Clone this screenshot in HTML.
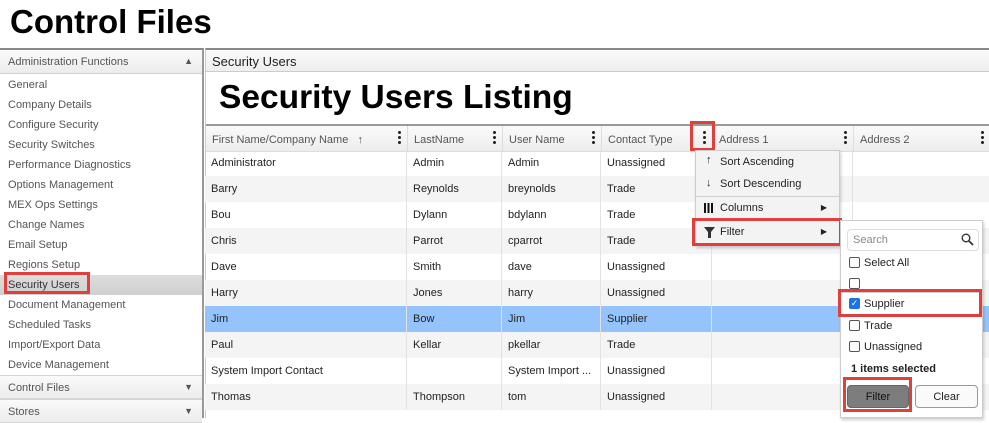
<!DOCTYPE html>
<html><head><style>
*{box-sizing:border-box;margin:0;padding:0}
body{width:989px;height:418px;overflow:hidden;background:#fff;font-family:"Liberation Sans",sans-serif;position:relative;color:#222}
.a{position:absolute}
h1{position:absolute;left:10px;top:3px;font-size:33px;font-weight:bold;color:#000}
.side{left:0;top:48px;width:204px;height:370px;border-top:2px solid #888;border-right:2px solid #999}
.sh{position:absolute;left:0;width:202px;height:24px;background:linear-gradient(#fafafa,#ececec);border-bottom:1px solid #d5d5d5;font-size:11px;color:#555;padding:6px 8px}
.sh span{position:absolute;right:9px;top:6px;font-size:9px;color:#555}
.it{position:absolute;left:0;width:202px;height:20px;font-size:11px;color:#555;padding:4px 8px}
.main{left:205px;top:48px;width:784px;height:370px;border-top:2px solid #888;border-left:1px solid #ccc}
.bar{position:absolute;left:0;top:0;width:784px;height:22px;background:linear-gradient(#fafafa,#eee);border-bottom:1px solid #ccc;font-size:13px;padding:4px 6px;color:#222}
.t2{position:absolute;left:13px;top:29px;font-size:33.5px;font-weight:bold;color:#000}
.hdr{position:absolute;left:0;top:74px;width:784px;height:28px;border-top:2px solid #999;background:linear-gradient(#fafafa,#ededed);border-bottom:1px solid #ddd}
.hc{position:absolute;top:0;height:26px;border-right:1px solid #ddd;font-size:11px;color:#555;padding:8px 6px}
.dots{position:absolute;right:6px;top:5px;width:3px}
.dots i{display:block;width:3px;height:3px;background:#222;border-radius:50%;margin-bottom:2px}
.row{position:absolute;left:0;width:784px;height:26px;font-size:11px;color:#222}
.row div{position:absolute;top:0;height:26px;padding:7px 6px;border-right:1px solid #e2e2e2;white-space:nowrap;overflow:hidden}
.red{position:absolute;border:3px solid #e0403c}
.menu{left:695px;top:150px;width:145px;height:96px;background:#f3f3f3;border:1px solid #ccc;box-shadow:1px 2px 3px rgba(0,0,0,.2);font-size:11px}
.mi{position:absolute;left:0;width:143px;height:23px;padding:5px 0 0 24px}
.fp{left:840px;top:220px;width:143px;height:198px;background:#fff;border:1px solid #ccc;box-shadow:1px 2px 3px rgba(0,0,0,.2);font-size:11px}
.cb{position:absolute;left:8px;width:11px;height:11px;border:1px solid #555;border-radius:2px;background:#fff}
.ck{position:absolute;left:23px;font-size:11px}
</style></head><body>
<h1>Control Files</h1>
<div class="a side">
<div class="sh" style="top:0">Administration Functions<span>▲</span></div>
<div class="it" style="top:25px">General</div>
<div class="it" style="top:45px">Company Details</div>
<div class="it" style="top:65px">Configure Security</div>
<div class="it" style="top:85px">Security Switches</div>
<div class="it" style="top:105px">Performance Diagnostics</div>
<div class="it" style="top:125px">Options Management</div>
<div class="it" style="top:145px">MEX Ops Settings</div>
<div class="it" style="top:165px">Change Names</div>
<div class="it" style="top:185px">Email Setup</div>
<div class="it" style="top:205px">Regions Setup</div>
<div class="it" style="top:225px;background:linear-gradient(#ddd,#cfcfcf);color:#333">Security Users</div>
<div class="it" style="top:245px">Document Management</div>
<div class="it" style="top:265px">Scheduled Tasks</div>
<div class="it" style="top:285px">Import/Export Data</div>
<div class="it" style="top:305px">Device Management</div>
<div class="sh" style="top:325px;border-top:1px solid #d5d5d5;color:#555">Control Files<span>▼</span></div>
<div class="sh" style="top:349px;border-top:1px solid #d5d5d5;color:#555">Stores<span>▼</span></div>
</div>
<div class="red" style="left:4px;top:272px;width:86px;height:22px"></div>

<div class="a main">
<div class="bar">Security Users</div>
<div class="t2">Security Users Listing</div>
<div class="hdr">
<div class="hc" style="left:0;width:202px">First Name/Company Name &nbsp;&nbsp;↑<div class="dots"><i></i><i></i><i></i></div></div>
<div class="hc" style="left:202px;width:95px">LastName<div class="dots"><i></i><i></i><i></i></div></div>
<div class="hc" style="left:297px;width:99px">User Name<div class="dots"><i></i><i></i><i></i></div></div>
<div class="hc" style="left:396px;width:111px">Contact Type<div class="dots"><i></i><i></i><i></i></div></div>
<div class="hc" style="left:507px;width:141px">Address 1<div class="dots"><i></i><i></i><i></i></div></div>
<div class="hc" style="left:648px;width:136px;border-right:none">Address 2<div class="dots"><i></i><i></i><i></i></div></div>
</div>
</div>
<div class="a" style="left:205px;top:150px;width:784px;height:268px">
<div class="row" style="top:0"><div style="left:0;width:202px">Administrator</div><div style="left:202px;width:95px">Admin</div><div style="left:297px;width:99px">Admin</div><div style="left:396px;width:111px">Unassigned</div><div style="left:507px;width:141px"></div></div>
<div class="row" style="top:26px;background:#f4f4f4"><div style="left:0;width:202px">Barry</div><div style="left:202px;width:95px">Reynolds</div><div style="left:297px;width:99px">breynolds</div><div style="left:396px;width:111px">Trade</div><div style="left:507px;width:141px"></div></div>
<div class="row" style="top:52px"><div style="left:0;width:202px">Bou</div><div style="left:202px;width:95px">Dylann</div><div style="left:297px;width:99px">bdylann</div><div style="left:396px;width:111px">Trade</div><div style="left:507px;width:141px"></div></div>
<div class="row" style="top:78px;background:#f4f4f4"><div style="left:0;width:202px">Chris</div><div style="left:202px;width:95px">Parrot</div><div style="left:297px;width:99px">cparrot</div><div style="left:396px;width:111px">Trade</div><div style="left:507px;width:141px"></div></div>
<div class="row" style="top:104px"><div style="left:0;width:202px">Dave</div><div style="left:202px;width:95px">Smith</div><div style="left:297px;width:99px">dave</div><div style="left:396px;width:111px">Unassigned</div><div style="left:507px;width:141px"></div></div>
<div class="row" style="top:130px;background:#f4f4f4"><div style="left:0;width:202px">Harry</div><div style="left:202px;width:95px">Jones</div><div style="left:297px;width:99px">harry</div><div style="left:396px;width:111px">Unassigned</div><div style="left:507px;width:141px"></div></div>
<div class="row" style="top:156px;background:#94c4fb"><div style="left:0;width:202px">Jim</div><div style="left:202px;width:95px">Bow</div><div style="left:297px;width:99px">Jim</div><div style="left:396px;width:111px">Supplier</div><div style="left:507px;width:141px"></div></div>
<div class="row" style="top:182px;background:#f4f4f4"><div style="left:0;width:202px">Paul</div><div style="left:202px;width:95px">Kellar</div><div style="left:297px;width:99px">pkellar</div><div style="left:396px;width:111px">Trade</div><div style="left:507px;width:141px"></div></div>
<div class="row" style="top:208px"><div style="left:0;width:202px">System Import Contact</div><div style="left:202px;width:95px"></div><div style="left:297px;width:99px">System Import ...</div><div style="left:396px;width:111px">Unassigned</div><div style="left:507px;width:141px"></div></div>
<div class="row" style="top:234px;background:#f4f4f4"><div style="left:0;width:202px">Thomas</div><div style="left:202px;width:95px">Thompson</div><div style="left:297px;width:99px">tom</div><div style="left:396px;width:111px">Unassigned</div><div style="left:507px;width:141px"></div></div>
</div>
<div class="red" style="left:690px;top:121px;width:25px;height:30px"></div>

<div class="a menu">
<div class="mi" style="top:0"><span style="position:absolute;left:10px;top:3px">↑</span>Sort Ascending</div>
<div class="mi" style="top:22px"><span style="position:absolute;left:10px;top:4px">↓</span>Sort Descending</div>
<div style="position:absolute;left:0;top:45px;width:143px;border-top:1px solid #d0d0d0"></div>
<div class="mi" style="top:46px"><span style="position:absolute;left:8px;top:6px;width:10px;height:10px;background:repeating-linear-gradient(90deg,#111 0 2px,transparent 2px 3.5px)"></span>Columns<span style="position:absolute;right:12px;top:6px;font-size:8px">▶</span></div>
<div class="mi" style="top:70px"><svg style="position:absolute;left:8px;top:6px" width="11" height="11" viewBox="0 0 11 11"><path d="M0 0H11L7 5V11H4V5Z" fill="#333"/></svg>Filter<span style="position:absolute;right:12px;top:6px;font-size:8px">▶</span></div>
</div>
<div class="red" style="left:692px;top:218px;width:150px;height:28px"></div>

<div class="a fp">
<div style="position:absolute;left:6px;top:8px;width:132px;height:22px;border:1px solid #ddd;border-radius:4px;background:#fff;color:#888;padding:4px 5px">Search
<svg style="position:absolute;right:4px;top:3px" width="13" height="13" viewBox="0 0 13 13"><circle cx="5" cy="5" r="3.8" fill="none" stroke="#333" stroke-width="1.4"/><path d="M8 8L12 12" stroke="#333" stroke-width="1.8"/></svg></div>
<div class="cb" style="top:36px"></div><div class="ck" style="top:36px">Select All</div>
<div class="cb" style="top:57px"></div>
<div style="position:absolute;left:-1px;top:71px;width:140px;height:25px;border:1px solid #ccc"></div>
<div class="cb" style="top:77px;background:#1a73e8;border-color:#1a73e8;color:#fff;font-size:9px;line-height:9px;text-align:center">✓</div><div class="ck" style="top:77px">Supplier</div>
<div class="cb" style="top:99px"></div><div class="ck" style="top:99px">Trade</div>
<div class="cb" style="top:120px"></div><div class="ck" style="top:120px">Unassigned</div>
<div style="position:absolute;left:10px;top:142px;font-weight:bold">1 items selected</div>
<div style="position:absolute;left:6px;top:164px;width:62px;height:23px;background:#7d7d7d;border:1px solid #666;border-radius:4px;text-align:center;padding-top:5px;color:#111">Filter</div>
<div style="position:absolute;left:74px;top:164px;width:63px;height:23px;background:#fafafa;border:1px solid #999;border-radius:4px;text-align:center;padding-top:5px">Clear</div>
</div>
<div class="red" style="left:838px;top:289px;width:144px;height:28px"></div>
<div class="red" style="left:843px;top:377px;width:69px;height:35px"></div>
</body></html>
